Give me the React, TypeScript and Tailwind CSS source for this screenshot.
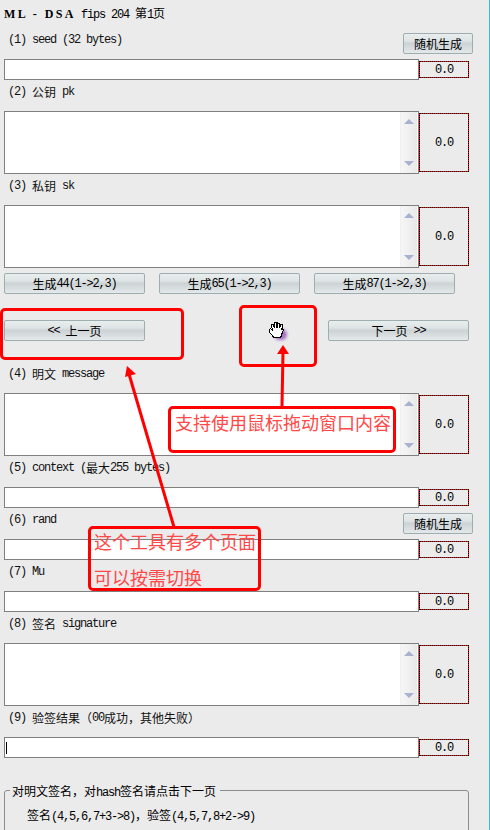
const latin = "font-['Liberation_Mono','Noto_Sans_CJK_SC',monospace] text-[12px] tracking-[-1.2px]";
const cjk = "font-['Noto_Sans_CJK_SC',sans-serif] text-[12px] tracking-normal";

function Mixed({ text }: { text: string }) {
  return (
    <>
      {text.split(/([\u3000-\u9fff\uff00-\uffef]+)/).map((part, i) => (
        <span key={i} className={i % 2 ? cjk : latin}>
          {part}
        </span>
      ))}
    </>
  );
}

function Button({ label, className = "" }: { label: string; className?: string }) {
  return (
    <button className={`flex h-[21px] shrink-0 items-center justify-center whitespace-pre rounded-[2px] border border-[#9eadb0] bg-[linear-gradient(#e8eded,#dfe5e6_35%,#cdd3d5_50%,#d8dee0_75%,#e4eaea)] leading-none text-black ${className}`}>
      <Mixed text={label} />
    </button>
  );
}

function Gauge({ big }: { big?: boolean }) {
  return (
    <div className={`w-[50px] border border-dotted border-black bg-[#ff0000] ${big ? "h-[59px]" : "h-[17px]"}`}>
      <div className="flex h-full items-center justify-center bg-[#ebebeb] text-black">
        <Mixed text="0.0" />
      </div>
    </div>
  );
}

function Input({ caret }: { caret?: boolean }) {
  return (
    <div className="flex h-[21px] w-[469px] items-center">
      <div className="flex h-full w-[415px] items-center border border-[#808080] bg-white pl-[1px]">
        {caret && <div className="h-[12px] w-[1px] bg-black" />}
      </div>
      <Gauge />
    </div>
  );
}

function TextArea() {
  return (
    <div className="flex h-[63px] w-[469px] items-center">
      <div className="flex h-full w-[415px] justify-end border border-[#808080] bg-white pr-[1px]">
        <div className="flex w-[17px] flex-col items-center justify-between border-l border-[#f0f0f0] bg-[linear-gradient(90deg,#f6f6f6,#e9e9e9)] py-[7px]">
          <div className="h-0 w-0 border-x-[5px] border-b-[5px] border-x-transparent border-b-[#a6b2d0]" />
          <div className="h-0 w-0 border-x-[5px] border-t-[5px] border-x-transparent border-t-[#a6b2d0]" />
        </div>
      </div>
      <Gauge big />
    </div>
  );
}

function Label({ text, action }: { text: string; action?: boolean }) {
  return (
    <div className="flex h-[31px] w-[469px] items-start justify-between">
      <div className="flex h-[23px] items-center whitespace-pre pl-[4px] leading-none text-[#111]">
        <Mixed text={text} />
      </div>
      {action && <Button label="随机生成" className="mt-[5px] w-[70px]" />}
    </div>
  );
}

function Hand() {
  return (
    <div className="absolute left-[267px] top-[320px] h-[21px] w-[21px]">
      <div className="absolute left-[7px] top-[9px] h-[11px] w-[13px] rounded-full bg-[#9a50b8] opacity-80 blur-[1.5px]" />
      <svg viewBox="0 0 15 15.5" className="absolute left-[1px] top-[1px] h-[17px] w-[16px]" shapeRendering="crispEdges">
        <path
          d="M5 15 L4 13 L2 11 L1 9 L1 7.5 L2.5 7 L4 8.5 L3.5 3.5 L5 3 L6 6 L6 1.5 L7.8 1 L8.5 6 L9 1.5 L10.8 2 L11 6.5 L12 3 L13.5 3.5 L13 8 L14.5 8 L13 12 L12 15 Z"
          fill="#fff"
          stroke="#000"
          strokeWidth="1"
        />
      </svg>
    </div>
  );
}

function Annotations() {
  const note = "font-['Noto_Sans_CJK_SC',sans-serif] text-[18px] leading-none text-[#ff4848] whitespace-nowrap";
  const box = "absolute rounded-[5px] border-[3px] border-[#ff0000]";
  return (
    <>
      <div className={`${box} left-0 top-[308px] h-[52px] w-[184px]`} />
      <div className={`${box} left-[239px] top-[305px] h-[62px] w-[78px]`} />
      <svg className="absolute left-0 top-0 h-[830px] w-[490px]" viewBox="0 0 490 830" fill="#ff0000">
        <path d="M282 406 L283 352" stroke="#ff0000" strokeWidth="3" />
        <path d="M283 345 L277 354 L289 354 Z" />
        <path d="M174 527 L129 374" stroke="#ff0000" strokeWidth="3" />
        <path d="M127 366 L125 377 L136 374 Z" />
      </svg>
      <div className={`${box} left-[168px] top-[406px] h-[47px] w-[228px] pl-[4px] pt-[4px]`}>
        <div className={note}>支持使用鼠标拖动窗口内容</div>
      </div>
      <div className={`${box} left-[88px] top-[526px] flex h-[65px] w-[173px] flex-col gap-[18px] pl-[3px] pt-[3px]`}>
        <div className={note}>这个工具有多个页面</div>
        <div className={note}>可以按需切换</div>
      </div>
      <Hand />
    </>
  );
}

export default function App() {
  return (
    <div className="relative h-[830px] w-[490px] overflow-hidden border-r border-[#35b8ee] bg-[#ebebeb] pl-[4px]">
      <div className="flex h-[28px] items-baseline whitespace-pre pt-[6px] leading-[12px] text-black">
        <span className="font-['Liberation_Serif',serif] text-[12px] font-bold tracking-[2.4px]">ML - DSA</span>
        <span className="ml-[5px]">
          <Mixed text="fips 204 第1页" />
        </span>
      </div>
      <Label text="(1) seed (32 bytes)" action />
      <Input />
      <Label text="(2) 公钥 pk" />
      <TextArea />
      <Label text="(3) 私钥 sk" />
      <TextArea />
      <div className="mt-[5px] flex gap-[14px]">
        <Button label="生成44(1->2,3)" className="w-[141px]" />
        <Button label="生成65(1->2,3)" className="w-[141px]" />
        <Button label="生成87(1->2,3)" className="w-[141px]" />
      </div>
      <div className="mb-[21px] mt-[26px] flex w-[465px] justify-between">
        <Button label="<< 上一页" className="w-[141px]" />
        <Button label="下一页 >>" className="w-[141px]" />
      </div>
      <Label text="(4) 明文 message" />
      <TextArea />
      <Label text="(5) context (最大255 bytes)" />
      <Input />
      <Label text="(6) rand" action />
      <Input />
      <Label text="(7) Mu" />
      <Input />
      <Label text="(8) 签名 signature" />
      <TextArea />
      <Label text="(9) 验签结果（00成功，其他失败）" />
      <Input caret />
      <fieldset className="mt-[24px] h-[80px] w-[465px] rounded-[3px] border border-[#8c8c8c]">
        <legend className="ml-[5px] h-[16px] whitespace-pre pl-[2px] pr-[4px] leading-[16px] text-black">
          <Mixed text="对明文签名，对hash签名请点击下一页" />
        </legend>
        <div className="mt-[6px] h-[20px] whitespace-pre pl-[22px] leading-[20px] text-black">
          <Mixed text="签名(4,5,6,7+3->8)，验签(4,5,7,8+2->9)" />
        </div>
      </fieldset>
      <Annotations />
    </div>
  );
}
